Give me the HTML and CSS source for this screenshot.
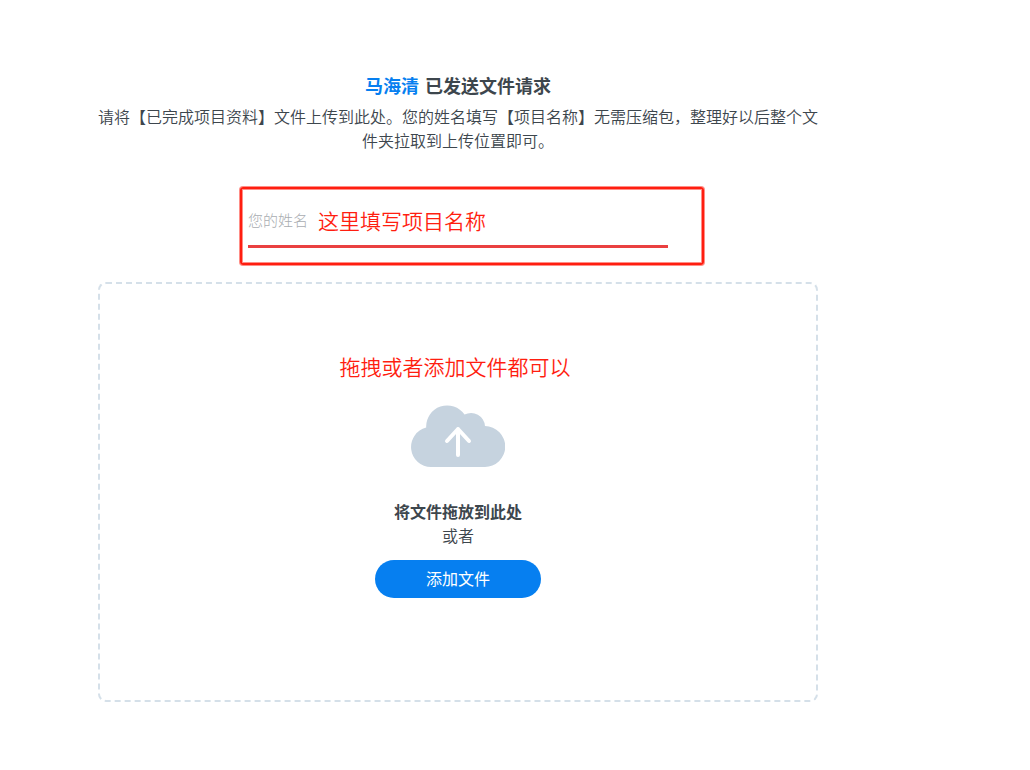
FILE: index.html
```html
<!DOCTYPE html>
<html lang="zh-CN">

<head>
    <meta charset="UTF-8">
    <meta name="viewport" content="width=device-width, initial-scale=1.0">
    <title>文件请求</title>
    <link rel="stylesheet" href="styles.css">
</head>

<body>

    <main class="request">
        <h1><span class="sender">马海清</span> 已发送文件请求</h1>
        <p class="message">请将【已完成项目资料】文件上传到此处。您的姓名填写【项目名称】无需压缩包，整理好以后整个文件夹拉取到上传位置即可。</p>

        <form class="upload-form">
            <!-- Name field -->
            <div class="name-field">
                <input type="text" id="name" placeholder="您的姓名" aria-label="您的姓名">
                <div class="note-frame"></div>
                <span class="note name-note">这里填写项目名称</span>
            </div>

            <!-- Drop area -->
            <div class="drop-zone">
                <span class="note drop-note">拖拽或者添加文件都可以</span>
                <svg class="cloud" width="94" height="62" viewBox="0 0 94 62" aria-hidden="true">
                    <path fill="#c6d3df" d="M20 62A20 20 0 0 1 15.200 22.600A21 21 0 0 1 53.500 9.600A14 14 0 0 1 74 21A20.500 20.500 0 0 1 73.500 62Z" />
                    <path fill="none" stroke="#fff" stroke-width="4" stroke-linecap="round" stroke-linejoin="round" d="M47 50V24M36 36L47 24L58 36" />
                </svg>
                <strong class="drop-title">将文件拖放到此处</strong>
                <span class="drop-or">或者</span>
                <button type="button" class="add-button">添加文件</button>
            </div>
        </form>
    </main>

</body>

</html>
```

FILE: styles.css
```css
* {
    box-sizing: border-box;
}

body {
    margin: 0;
    padding: 71px 114px 68px 0;
    background: #fff;
    color: #3d464d;
    font-family: "Noto Sans CJK SC", sans-serif;
    font-size: 16px;
    line-height: 24px;
    text-spacing-trim: space-all;
}

.request {
    max-width: 720px;
    margin: 0 auto;
}

h1 {
    margin: 0 0 5px;
    font-size: 18px;
    line-height: 28px;
    text-align: center;
}

.sender {
    margin-right: 2px;
    color: #067ff0;
}

.message {
    margin: 0;
    font-weight: 350;
    text-align: center;
}

.upload-form {
    display: flex;
    flex-direction: column;
    align-items: center;
    gap: 34px;
    margin-top: 44px;
}

.name-field {
    position: relative;
    width: 100%;
    max-width: 420px;
}

.name-field input {
    display: block;
    width: 100%;
    height: 52px;
    padding: 0 0 2px;
    border: none;
    border-bottom: 3px solid #ea4040;
    background: transparent;
    color: #3d464d;
    font-family: inherit;
    font-size: 15px;
    font-weight: 300;
    outline: none;
}

.name-field input::placeholder {
    color: #a9adb1;
    opacity: 1;
}

/* Red notes over the form */
.note {
    position: absolute;
    color: #ff1e10;
    font-size: 21px;
    font-weight: 350;
    line-height: 30px;
    white-space: nowrap;
    pointer-events: none;
}

.name-note {
    top: 9px;
    left: 70px;
}

.note-frame {
    position: absolute;
    top: -9px;
    right: -36px;
    bottom: -17px;
    left: -8px;
    border: 2px solid #ff1e10;
    border-radius: 3px;
    box-shadow: 0 0 0 1px rgba(255, 30, 16, 0.5), inset 0 0 0 1px rgba(255, 30, 16, 0.5);
    pointer-events: none;
}

.drop-zone {
    position: relative;
    display: flex;
    flex-direction: column;
    align-items: center;
    width: 100%;
    min-height: 420px;
    padding: 121px 20px 100px;
    border: 2px dashed #d5e0e9;
    border-radius: 8px;
}

.drop-note {
    top: 67px;
    margin-right: 6px;
}

.cloud {
    margin-bottom: 32px;
}

.drop-or {
    font-weight: 350;
}

.add-button {
    margin-top: 13px;
    padding: 6px 51px 8px;
    border: none;
    border-radius: 20px;
    background: #067ff0;
    color: #fff;
    font-family: inherit;
    font-size: 16px;
    line-height: 24px;
    cursor: pointer;
}

.add-button:hover {
    background: #0570d4;
}
```
